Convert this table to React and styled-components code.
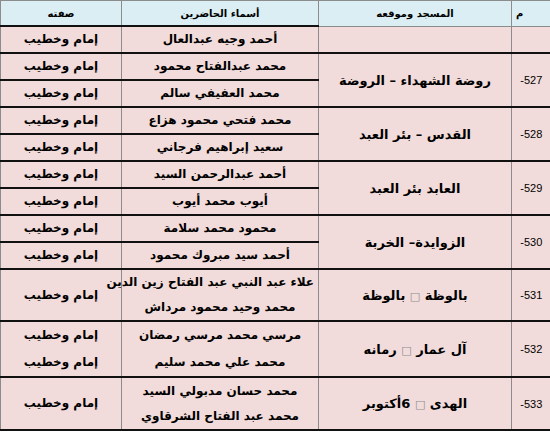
import React from 'react'
import styled, { createGlobalStyle } from 'styled-components'

const GlobalStyle = createGlobalStyle`
  html, body {
    margin: 0;
    padding: 0;
    background: #ffffff;
  }
`

const Table = styled.table`
  width: 550px;
  table-layout: fixed;
  border-collapse: collapse;
  direction: rtl;
  font-family: 'DejaVu Sans', 'Noto Sans', sans-serif;
  color: #000;
`
const HeadCell = styled.th`
  height: 24px;
  padding: 0 4px;
  background: #daeef3;
  border-left: 1px solid #8c8c8c;
  border-top: 1px solid #8c8c8c;
  border-bottom: ${props => (props.$strong ? '2px solid #111' : '1px solid #8c8c8c')};
  font-size: 10px;
  font-weight: bold;
  text-align: ${props => props.$align || 'center'};
  vertical-align: middle;
`
const Cell = styled.td`
  height: ${props => props.$h || 25}px;
  padding: 0 4px;
  background: #f2dcdb;
  border-left: 1px solid #8c8c8c;
  border-bottom: 2px solid #111;
  text-align: center;
  vertical-align: middle;
  font-size: 12px;
  font-weight: bold;
  white-space: nowrap;
`
const NumCell = styled(Cell)`
  direction: ltr;
  font-family: 'Liberation Sans', Arial, sans-serif;
  font-size: 11px;
  font-weight: normal;
`
const MasjidCell = styled(Cell)`
  font-size: 13px;
`
const Line = styled.div`
  line-height: ${props => props.$lh || 25}px;
`
const Box = styled.span`
  color: #8c8c8c;
  font-weight: normal;
  font-size: 11px;
`

const Masjid = ({ text }) => {
  const parts = text.split('□')
  return parts.map((p, i) => (
    <React.Fragment key={i}>
      {p}
      {i < parts.length - 1 && <Box>□</Box>}
    </React.Fragment>
  ))
}

const ROLE = 'إمام وخطيب'

const groups = [
  { num: '', masjid: '', rows: [{ names: ['أحمد وجيه عبدالعال'], roles: [ROLE] }] },
  {
    num: '-527',
    masjid: 'روضة الشهداء – الروضة',
    rows: [
      { names: ['محمد عبدالفتاح محمود'], roles: [ROLE] },
      { names: ['محمد العفيفي سالم'], roles: [ROLE] },
    ],
  },
  {
    num: '-528',
    masjid: 'القدس – بئر العبد',
    rows: [
      { names: ['محمد فتحي محمود هزاع'], roles: [ROLE] },
      { names: ['سعيد إبراهيم فرجاني'], roles: [ROLE] },
    ],
  },
  {
    num: '-529',
    masjid: 'العابد  بئر العبد',
    rows: [
      { names: ['أحمد عبدالرحمن السيد'], roles: [ROLE] },
      { names: ['أيوب محمد أيوب'], roles: [ROLE] },
    ],
  },
  {
    num: '-530',
    masjid: 'الزوايدة– الخربة',
    rows: [
      { names: ['محمود محمد سلامة'], roles: [ROLE] },
      { names: ['أحمد سيد مبروك محمود'], roles: [ROLE] },
    ],
  },
  {
    num: '-531',
    masjid: 'بالوظة □ بالوظة',
    h: 50,
    rows: [{ names: ['علاء عبد النبي عبد الفتاح زين الدين', 'محمد وحيد محمود مرداش'], roles: [ROLE] }],
  },
  {
    num: '-532',
    masjid: 'آل عمار □ رمانه',
    h: 54,
    lh: 27,
    rows: [{ names: ['مرسي محمد مرسي رمضان', 'محمد علي محمد سليم'], roles: [ROLE, ROLE] }],
  },
  {
    num: '-533',
    masjid: 'الهدى □ 6أكتوبر',
    h: 51,
    rows: [{ names: ['محمد حسان مدبولي السيد', 'محمد عبد الفتاح الشرقاوي'], roles: [ROLE] }],
  },
]

export default function App() {
  return (
    <>
      <GlobalStyle />
      <Table>
        <colgroup>
          <col style={{ width: 39 }} />
          <col style={{ width: 193 }} />
          <col style={{ width: 197 }} />
          <col style={{ width: 121 }} />
        </colgroup>
        <thead>
          <tr>
            <HeadCell $align="left">م</HeadCell>
            <HeadCell>المسجد وموقعه</HeadCell>
            <HeadCell $strong>أسماء الحاضرين</HeadCell>
            <HeadCell $strong>صفته</HeadCell>
          </tr>
        </thead>
        <tbody>
          {groups.map(g =>
            g.rows.map((r, i) => (
              <tr key={g.num + i}>
                {i === 0 && (
                  <>
                    <NumCell rowSpan={g.rows.length} $h={g.h}>
                      {g.num}
                    </NumCell>
                    <MasjidCell rowSpan={g.rows.length} $h={g.h}>
                      <Masjid text={g.masjid} />
                    </MasjidCell>
                  </>
                )}
                <Cell $h={g.h}>
                  {r.names.map(n => (
                    <Line key={n} $lh={g.lh}>
                      {n}
                    </Line>
                  ))}
                </Cell>
                <Cell $h={g.h}>
                  {r.roles.map((x, k) => (
                    <Line key={k} $lh={g.lh}>
                      {x}
                    </Line>
                  ))}
                </Cell>
              </tr>
            )),
          )}
        </tbody>
      </Table>
    </>
  )
}
